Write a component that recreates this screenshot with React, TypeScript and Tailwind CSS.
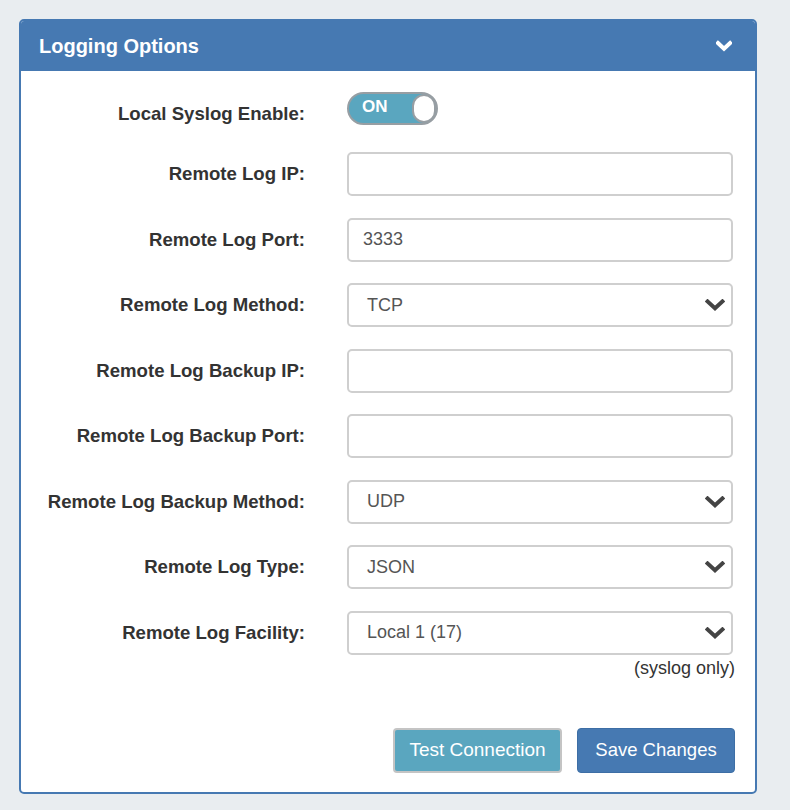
import React from "react";

const font = { fontFamily: '"Liberation Sans", Arial, Helvetica, sans-serif' };

function Chevron({ className, color, width }: { className?: string; color: string; width: string }) {
  return (
    <svg className={className} viewBox="0 0 18 11" fill="none">
      <polyline points="2.2,2.2 9,8.5 15.8,2.2" stroke={color} strokeWidth={width} strokeLinecap="square" strokeLinejoin="miter" />
    </svg>
  );
}

function Label({ children }: { children: React.ReactNode }) {
  return (
    <div className="w-[284px] shrink-0 text-right text-[18.6px] font-bold text-[#333333] leading-[22px]">
      {children}
    </div>
  );
}

function TextInput({ value }: { value?: string }) {
  return (
    <div className="w-[386px] h-[44px] border-2 border-[#cfcfcf] rounded-[5px] flex items-center pl-[14px] text-[18px] text-[#555555]">
      {value}
    </div>
  );
}

function Select({ value }: { value: string }) {
  return (
    <div className="w-[386px] h-[44px] border-2 border-[#cfcfcf] rounded-[5px] flex items-center justify-between pl-[18px] pr-[6px] text-[18px] text-[#555555]">
      <span>{value}</span>
      <Chevron className="w-[20px] h-[12px]" color="#444444" width="3.6" />
    </div>
  );
}

function Row({ label, children }: { label: string; children: React.ReactNode }) {
  return (
    <div className="flex items-center gap-[42px]">
      <Label>{label}</Label>
      {children}
    </div>
  );
}

export default function App() {
  return (
    <div style={font} className="min-h-[810px] bg-[#e9edf0] pt-[19px] pl-[19px]">
      <div className="w-[738px] h-[775px] rounded-[5px] border-2 border-[#4679b2] bg-white overflow-hidden flex flex-col">
        <div className="h-[50px] bg-[#4679b2] flex items-center justify-between pl-[18px] pr-[23px] shrink-0">
          <span className="text-white text-[20px] font-bold">Logging Options</span>
          <Chevron className="w-[16px] h-[12px]" color="#ffffff" width="4.6" />
        </div>
        <div className="flex flex-col pt-[21px]">
          <div className="flex items-start gap-[42px] h-[33px]">
            <div className="mt-[11px]">
              <Label>Local Syslog Enable:</Label>
            </div>
            <div className="relative w-[91px] h-[33px] rounded-full border-2 border-[#979ea3] bg-[#5aa6bf]">
              <span className="absolute left-[13px] top-[3px] text-white font-bold text-[17px] leading-[20px]">ON</span>
              <div className="absolute right-[0px] top-[0px] w-[24px] h-[29px] rounded-full bg-white border-2 border-[#979ea3]" />
            </div>
          </div>
          <div className="flex flex-col gap-[21.5px] mt-[27px]">
            <Row label="Remote Log IP:"><TextInput /></Row>
            <Row label="Remote Log Port:"><TextInput value="3333" /></Row>
            <Row label="Remote Log Method:"><Select value="TCP" /></Row>
            <Row label="Remote Log Backup IP:"><TextInput /></Row>
            <Row label="Remote Log Backup Port:"><TextInput /></Row>
            <Row label="Remote Log Backup Method:"><Select value="UDP" /></Row>
            <Row label="Remote Log Type:"><Select value="JSON" /></Row>
            <Row label="Remote Log Facility:"><Select value="Local 1 (17)" /></Row>
          </div>
          <div className="flex justify-end pr-[20px] mt-[2px] text-[18px] leading-[22px] text-[#333333]">(syslog only)</div>
          <div className="flex justify-end gap-[15px] pr-[20px] mt-[49px]">
            <button className="w-[169px] h-[45px] rounded-[4px] border-2 border-[#c4c4c4] bg-[#5aa6bf] text-white text-[19px]">
              Test Connection
            </button>
            <button className="w-[158px] h-[45px] rounded-[4px] border border-[#3d6ea5] bg-[#4679b2] text-white text-[18.5px]">
              Save Changes
            </button>
          </div>
        </div>
      </div>
    </div>
  );
}
